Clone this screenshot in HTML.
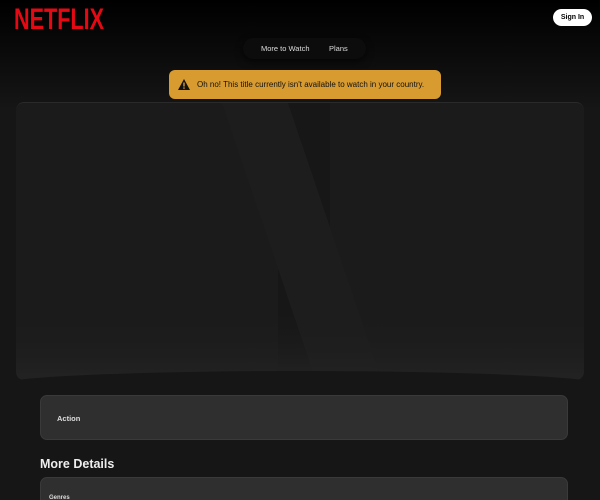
<!DOCTYPE html>
<html><head><meta charset="utf-8"><style>
*{margin:0;padding:0;box-sizing:border-box}
html,body{width:600px;height:500px;overflow:hidden}
body{background:#161616;font-family:"Liberation Sans",sans-serif;color:#fff;position:relative}
.top{position:absolute;left:0;top:0;width:600px;height:110px;background:linear-gradient(#000 0%,#161616 100%)}
.logo{position:absolute;left:14px;top:3px;font-size:30px;font-weight:bold;color:#e50914;letter-spacing:0px;transform:scaleX(0.72);transform-origin:left;white-space:nowrap}
.sign{position:absolute;left:553px;top:9px;width:39px;height:17px;background:#fff;color:#000;border-radius:9px;font-size:7px;font-weight:bold;text-align:center;line-height:17px}
.nav{position:absolute;left:243px;top:38px;width:123px;height:21px;background:#0c0c0c;border-radius:11px;font-size:7.5px;color:#ddd;box-shadow:0 3px 8px rgba(0,0,0,.6)}
.nav span{position:absolute;top:6px}
.alert{position:absolute;left:169px;top:70px;width:272px;height:29px;background:#d89b30;border-radius:6px;color:#111;font-size:8px}
.alert span{position:absolute;left:28px;top:10px;white-space:nowrap}
.hero{position:absolute;left:16px;top:102px;width:568px;height:278px;border-radius:8px;background:#1b1b1b;overflow:hidden;border-top:1px solid #2a2a2a}
.btm{position:absolute;left:-20px;top:268px;width:608px;height:40px;background:#161616;border-radius:50% 50% 0 0/14px 14px 0 0}
.card{position:absolute;left:40px;width:528px;background:#2f2f2f;border-radius:7px;border:1px solid #3a3a3a}
.card span{position:absolute;font-size:7.5px;font-weight:bold;color:#ddd}
h2{position:absolute;left:40px;top:457px;font-size:12.5px;font-weight:bold;color:#eee}
</style></head><body>
<div class="top"></div>
<div class="logo">NETFLIX</div>
<div class="sign">Sign In</div>
<div class="nav"><span style="left:18px">More to Watch</span><span style="left:86px">Plans</span></div>
<div class="hero">
<svg width="568" height="278" style="position:absolute;left:0;top:0">
<defs><linearGradient id="g" x1="0" y1="0" x2="0" y2="1"><stop offset="0.75" stop-color="#1b1b1b" stop-opacity="0"/><stop offset="1" stop-color="#232323"/></linearGradient></defs>
<polygon points="262,0 314,0 314,278 262,278" fill="#171717"/>
<polygon points="206,0 272,0 366,278 300,278" fill="#1d1d1d"/>
<rect width="568" height="278" fill="url(#g)"/>
</svg>
<div class="btm"></div>
</div>
<div class="alert"><svg width="12" height="11" style="position:absolute;left:9px;top:9px" viewBox="0 0 12 11"><polygon points="6,0 12,11 0,11" fill="#111"/><rect x="5.3" y="3.5" width="1.4" height="4" fill="#d89b30"/><rect x="5.3" y="8.4" width="1.4" height="1.4" fill="#d89b30"/></svg><span>Oh no! This title currently isn't available to watch in your country.</span></div>
<div class="card" style="top:395px;height:45px"><span style="left:16px;top:18px">Action</span></div>
<h2>More Details</h2>
<div class="card" style="top:477px;height:40px"><span style="left:8px;top:17px;font-size:6px">Genres</span></div>
</body></html>
